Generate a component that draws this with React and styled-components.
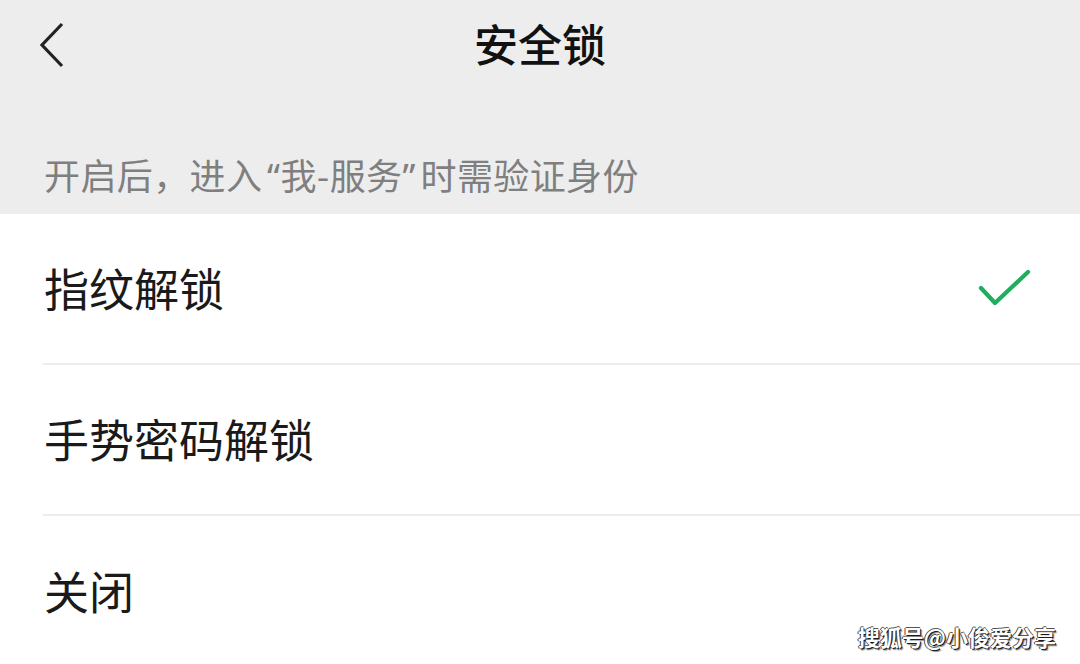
import React from "react";
import styled, { createGlobalStyle } from "styled-components";

const Global = createGlobalStyle`
  html, body { margin: 0; padding: 0; background: #ffffff; }
  body { font-family: "Noto Sans CJK SC", "Noto Sans", sans-serif; }
  * { box-sizing: border-box; }
`;

const Page = styled.div`
  position: relative;
  width: 1080px;
  height: 664px;
  overflow: hidden;
  background: #ffffff;
`;

const Top = styled.div`
  background: #ededed;
  display: flex;
  flex-direction: column;
`;

const NavBar = styled.div`
  height: 86px;
  display: grid;
  grid-template-columns: 120px 1fr 120px;
  align-items: center;
`;

const BackButton = styled.div`
  display: flex;
  align-items: center;
  padding-left: 38px;
  height: 100%;
  padding-top: 4px;
`;

const Title = styled.div`
  text-align: center;
  font-size: 44px;
  font-weight: 500;
  color: #111111;
  line-height: 1;
`;

const Tip = styled.div`
  height: 128px;
  display: flex;
  align-items: flex-end;
  padding: 0 0 19px 44px;
  font-size: 36px;
  line-height: 36px;
  letter-spacing: 0.4px;
  color: #7f7f7f;
`;

const Quote = styled.span`
  font-family: "Noto Sans", "Liberation Sans", sans-serif;
  display: inline-block;
  width: 18px;
  text-align: ${(p) => (p.$open ? "right" : "left")};
`;

const List = styled.div`
  display: flex;
  flex-direction: column;
  padding-left: 43px;
`;

const Row = styled.div`
  height: 151px;
  display: flex;
  align-items: center;
  justify-content: space-between;
  padding-right: 48px;
  border-bottom: ${(p) => (p.$last ? "none" : "2px solid #ececec")};
`;

const Label = styled.span`
  font-size: 45px;
  color: #1a1a1a;
  line-height: 1;
  margin-left: 1px;
  margin-top: -2px;
`;

const Watermark = styled.div`
  position: absolute;
  right: 24px;
  bottom: 12px;
  font-size: 22px;
  font-weight: 700;
  color: #ffffff;
  text-shadow: 1px 1px 0 #1a1a1a, -1px 0 0 #444, 0 -1px 0 #555, 2px 2px 1px rgba(0,0,0,0.4);
`;

const BackIcon = () => (
  <svg width="28" height="48" viewBox="0 0 28 48">
    <path d="M24 3 L4 24 L24 45" fill="none" stroke="#222" strokeWidth="3.2" strokeLinecap="butt" strokeLinejoin="miter" />
  </svg>
);

const CheckIcon = () => (
  <svg width="54" height="40" viewBox="0 0 54 40">
    <path d="M3 19 L17 34 L50 3" fill="none" stroke="#1fad5e" strokeWidth="4.2" strokeLinecap="round" strokeLinejoin="round" />
  </svg>
);

const items = [
  { label: "指纹解锁", checked: true },
  { label: "手势密码解锁", checked: false },
  { label: "关闭", checked: false },
];

export default function App() {
  return (
    <Page>
      <Global />
      <Top>
        <NavBar>
          <BackButton>
            <BackIcon />
          </BackButton>
          <Title>安全锁</Title>
          <div />
        </NavBar>
        <Tip>
          <span>
            开启后，进入<Quote $open>“</Quote>我-服务<Quote>”</Quote>时需验证身份
          </span>
        </Tip>
      </Top>
      <List>
        {items.map((it, i) => (
          <Row key={it.label} $last={i === items.length - 1}>
            <Label>{it.label}</Label>
            {it.checked && <CheckIcon />}
          </Row>
        ))}
      </List>
      <Watermark>搜狐号@小俊爱分享</Watermark>
    </Page>
  );
}
